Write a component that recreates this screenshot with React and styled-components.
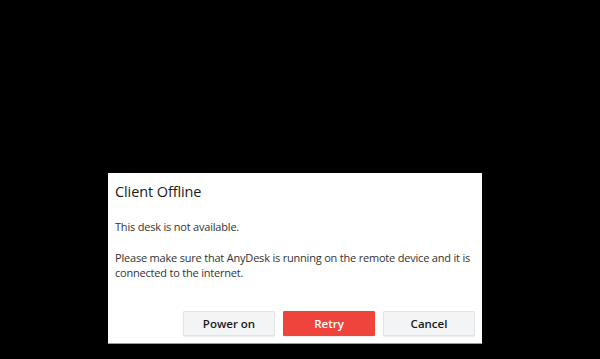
import React from 'react'
import styled, { createGlobalStyle } from 'styled-components'

const GlobalStyle = createGlobalStyle`
html, body {
  margin: 0;
  padding: 0;
  background: #000;
}
body {
  font-family: 'Open Sans', 'Noto Sans', sans-serif;
}
`

const Screen = styled.div`
width: 600px;
height: 359px;
background: #000;
padding: 173px 0 0 108px;
box-sizing: border-box;
overflow: hidden;
`

const Dialog = styled.div`
width: 374px;
height: 171px;
box-sizing: border-box;
background: #fff;
border-bottom: 1px solid #9a9a9a;
display: flex;
flex-direction: column;
padding: 8px 7px 7px 7px;
`

const Title = styled.div`
font-size: 14.5px;
line-height: 22px;
color: #1a1a1a;
margin-bottom: 16px;
letter-spacing: -0.1px;
`

const Text = styled.p`
margin: 0 -6px 16px 0;
font-size: 11px;
line-height: 15px;
color: #333;
letter-spacing: -0.2px;
`

const Footer = styled.div`
margin-top: auto;
display: flex;
justify-content: flex-end;
gap: 8px;
`

const Button = styled.button`
width: 92px;
height: 25px;
box-sizing: border-box;
font-family: 'Open Sans', 'Noto Sans', sans-serif;
font-size: 11.5px;
font-weight: 600;
border-radius: 1px;
cursor: pointer;
border: 1px solid ${p => (p.$primary ? '#ef443b' : '#e3e4e6')};
background: ${p => (p.$primary ? '#ef443b' : '#f3f4f6')};
color: ${p => (p.$primary ? '#fff' : '#1a1a1a')};
box-shadow: 0 1px 1px rgba(0, 0, 0, 0.08);
`

export default function App() {
    return (
        <>
            <GlobalStyle />
            <Screen>
                <Dialog>
                    <Title>Client Offline</Title>
                    <Text>This desk is not available.</Text>
                    <Text>
                        Please make sure that AnyDesk is running on the remote device and it is connected to the internet.
                    </Text>
                    <Footer>
                        <Button>Power on</Button>
                        <Button $primary>Retry</Button>
                        <Button>Cancel</Button>
                    </Footer>
                </Dialog>
            </Screen>
        </>
    )
}
